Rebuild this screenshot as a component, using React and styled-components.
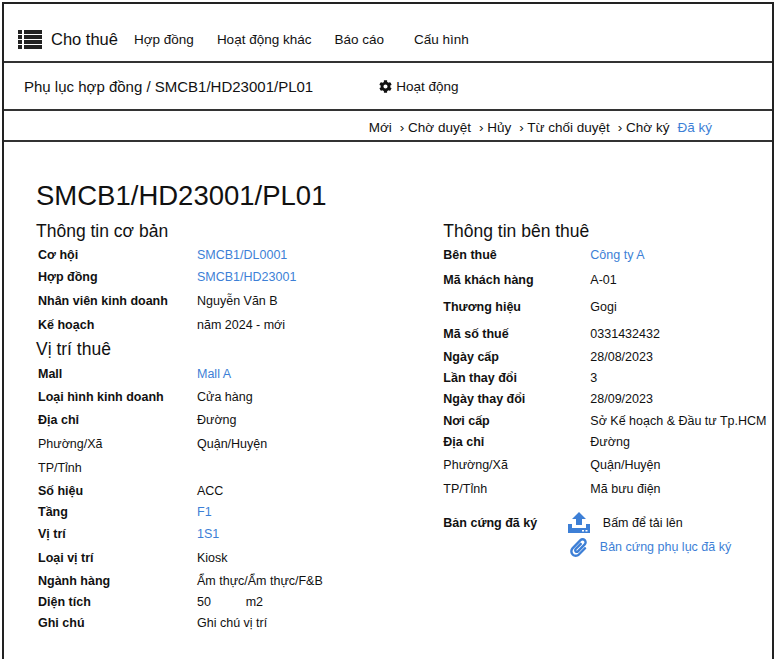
import styled, { createGlobalStyle } from 'styled-components';
import { FaCog, FaPaperclip } from 'react-icons/fa';

const Global = createGlobalStyle`
  body { margin: 0; background: #fff; font-family: "Liberation Sans", Arial, sans-serif; color: #111; }
`;

const Frame = styled.div`
  margin: 2px 0 0 2px;
  width: 768px;
  height: 670px;
  border: 2px solid #222;
  border-bottom: none;
  overflow: hidden;
`;

const TopBar = styled.div`
  height: 59px;
  box-sizing: border-box;
  padding: 14px 0 0 14px;
  display: flex;
  align-items: center;
  border-bottom: 2px solid #333;
  font-size: 13.5px;
  a { margin-right: 23px; }
  a:nth-child(4) { margin-right: 30px; }
`;

const Brand = styled.div`
  display: flex;
  align-items: center;
  gap: 9px;
  font-size: 16.5px;
  margin-right: 16px;
`;

const Sub = styled.div`
  height: 46px;
  display: flex;
  align-items: center;
  padding-left: 20px;
  border-bottom: 2px solid #333;
  font-size: 15px;
  span.act { margin-left: 66px; font-size: 13.5px; display: flex; align-items: center; gap: 4px; }
`;

const Steps = styled.div`
  height: 31px;
  box-sizing: border-box;
  padding: 4px 60px 0 0;
  display: flex;
  align-items: center;
  justify-content: flex-end;
  border-bottom: 2px solid #333;
  font-size: 13.5px;
  gap: 6px;
`;

const Step = styled.span`
  color: ${p => (p.active ? '#3d7fd6' : '#111')};
  & + &::before { content: '› '; color: #111; }
  &:not(:first-child) { margin-left: 2px; }
`;

const Body = styled.div`
  padding: 38px 0 0 32px;
`;

const Title = styled.h1`
  margin: 0 0 6px;
  font-weight: 400;
  font-size: 27.5px;
`;

const Cols = styled.div`
  display: flex;
`;

const Col = styled.div`
  width: ${p => p.w}px;
  display: flex;
  flex-direction: column;
`;

const Heading = styled.div`
  font-size: 17.5px;
  height: ${p => p.h}px;
  display: flex;
  align-items: center;
`;

const Row = styled.div`
  height: ${p => p.h}px;
  display: flex;
  align-items: center;
  font-size: 12.5px;
`;

const Label = styled.div`
  width: ${p => p.w}px;
  padding-left: ${p => p.pl ?? 4}px;
  font-weight: ${p => (p.plain ? 400 : 700)};
  box-sizing: border-box;
`;

const Value = styled.div`
  color: ${p => (p.link ? '#3d7fd6' : '#111')};
  white-space: pre;
  display: flex;
  align-items: center;
  gap: 8px;
`;

const left = [
  ['h', 'Thông tin cơ bản', 26],
  ['Cơ hội', 'SMCB1/DL0001', 22, true],
  ['Hợp đồng', 'SMCB1/HD23001', 22, true],
  ['Nhân viên kinh doanh', 'Nguyễn Văn B', 25],
  ['Kế hoạch', 'năm 2024 - mới', 23],
  ['h', 'Vị trí thuê', 26],
  ['Mall', 'Mall A', 24, true],
  ['Loại hình kinh doanh', 'Cửa hàng', 22],
  ['Địa chỉ', 'Đường', 24],
  ['Phường/Xã', 'Quận/Huyện', 23, false, true],
  ['TP/Tỉnh', '', 25, false, true],
  ['Số hiệu', 'ACC', 21],
  ['Tầng', 'F1', 22, true],
  ['Vị trí', '1S1', 22, true],
  ['Loại vị trí', 'Kiosk', 25],
  ['Ngành hàng', 'Ẩm thực/Ẩm thực/F&B', 22],
  ['Diện tích', '50          m2', 20],
  ['Ghi chú', 'Ghi chú vị trí', 22],
];

const right = [
  ['h', 'Thông tin bên thuê', 26],
  ['Bên thuê', 'Công ty A', 22, true],
  ['Mã khách hàng', 'A-01', 27],
  ['Thương hiệu', 'Gogi', 28],
  ['Mã số thuế', '0331432432', 25],
  ['Ngày cấp', '28/08/2023', 21],
  ['Lần thay đổi', '3', 21],
  ['Ngày thay đổi', '28/09/2023', 22],
  ['Nơi cấp', 'Sở Kế hoạch & Đầu tư Tp.HCM', 21],
  ['Địa chỉ', 'Đường', 22],
  ['Phường/Xã', 'Quận/Huyện', 24, false, true],
  ['TP/Tỉnh', 'Mã bưu điện', 24, false, true],
];

function Rows({ data, lw, pl }) {
  return data.map(([l, v, h, link, plain], i) =>
    l === 'h' ? (
      <Heading key={i} h={h}>{v}</Heading>
    ) : (
      <Row key={i} h={h}>
        <Label w={lw} pl={pl} plain={plain}>{l}</Label>
        <Value link={link}>{v}</Value>
      </Row>
    )
  );
}

function UploadIcon() {
  return (
    <svg width="24" height="22" viewBox="0 0 24 22">
      <path d="M12 0 L19 7 H15 V13 H9 V7 H5 Z" fill="#3d7fd6" />
      <path d="M1 12 H5 V16 H19 V12 H23 V21 H1 Z" fill="#3d7fd6" />
      <rect x="15" y="18" width="2" height="1.5" fill="#fff" />
      <rect x="18.5" y="18" width="2" height="1.5" fill="#fff" />
    </svg>
  );
}

export default function App() {
  return (
    <>
      <Global />
      <Frame>
        <TopBar>
          <Brand>
            <svg width="24" height="20" viewBox="0 0 24 20">
              {[0, 5, 10, 15].map(y => (
                <g key={y}>
                  <rect x="0" y={y} width="4" height="4" fill="#222" />
                  <rect x="6" y={y} width="18" height="4" fill="#222" />
                </g>
              ))}
            </svg>
            Cho thuê
          </Brand>
          <a>Hợp đồng</a>
          <a>Hoạt động khác</a>
          <a>Báo cáo</a>
          <a>Cấu hình</a>
        </TopBar>
        <Sub>
          Phụ lục hợp đồng / SMCB1/HD23001/PL01
          <span className="act"><FaCog size={13} /> Hoạt động</span>
        </Sub>
        <Steps>
          <Step>Mới</Step>
          <Step>Chờ duyệt</Step>
          <Step>Hủy</Step>
          <Step>Từ chối duyệt</Step>
          <Step>Chờ ký</Step>
          <Step active>Đã ký</Step>
        </Steps>
        <Body>
          <Title>SMCB1/HD23001/PL01</Title>
          <Cols>
            <Col w={409}>
              <Rows data={left} lw={161} pl={2} />
            </Col>
            <Col w={330}>
              <Rows data={right} lw={147} pl={0} />
              <Row h={24} style={{ marginTop: 10 }}>
                <Label w={124} pl={0}>Bản cứng đã ký</Label>
                <Value><UploadIcon /> Bấm để tải lên</Value>
              </Row>
              <Row h={24}>
                <Label w={126} />
                <Value link><FaPaperclip size={19} color="#3d7fd6" /> Bản cứng phụ lục đã ký</Value>
              </Row>
            </Col>
          </Cols>
        </Body>
      </Frame>
    </>
  );
}
